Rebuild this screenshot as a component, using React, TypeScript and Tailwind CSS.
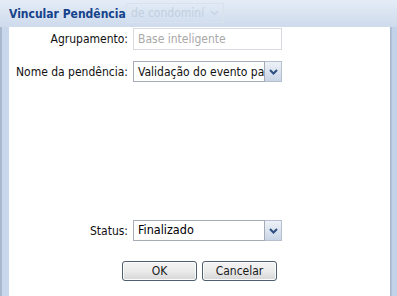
const font = { fontFamily: '"DejaVu Sans Condensed", "DejaVu Sans", Tahoma, sans-serif' };

function Chevron() {
  return (
    <svg width="9" height="6" viewBox="0 0 9 6" className="block">
      <path d="M1 1 L4.5 4.5 L8 1" fill="none" stroke="#2d4f80" strokeWidth="2" />
    </svg>
  );
}

function Select({ value, textClass }: { value: string; textClass: string }) {
  return (
    <div className="flex h-[21px] w-[149px]">
      <div className={`flex-1 flex items-center border border-[#a5acb5] bg-white pl-[4px] overflow-hidden whitespace-nowrap ${textClass}`}>
        {value}
      </div>
      <div className="w-[17px] flex items-center justify-center border border-l-0 border-[#b5bfcd] bg-gradient-to-b from-[#eef2f8] to-[#c9d5e6]">
        <Chevron />
      </div>
    </div>
  );
}

function Button({ label }: { label: string }) {
  return (
    <button className="h-[20px] w-[75px] rounded-[3px] border border-[#4f5e70] bg-gradient-to-b from-[#f4f4f4] via-[#ebebeb] to-[#d6d6d6] text-[12px] text-[#1a1a1a] shadow-[inset_0_0_0_1px_#fcfcfc]">
      {label}
    </button>
  );
}

export default function App() {
  return (
    <div className="w-[397px] h-[296px] overflow-hidden flex flex-col bg-[#c8d7eb]" style={font}>
      <div className="relative h-[27px] flex items-center pl-[9px] bg-gradient-to-b from-[#e4ecf7] to-[#cedbec]">
        <div className="absolute left-[126px] top-[3px] h-[20px] w-[98px] flex items-center gap-[6px] pl-[4px] border border-[#d8e1ec] text-[12px] text-[#c2cfdf]">
          <span>de condominí</span>
          <svg width="9" height="6" viewBox="0 0 9 6">
            <path d="M1 1 L4.5 4.5 L8 1" fill="none" stroke="#c8d3e3" strokeWidth="1.5" />
          </svg>
        </div>
        <span className="relative text-[12px] font-bold text-[#15428b]">Vincular Pendência</span>
      </div>
      <div className="flex flex-1">
        <div className="w-[9px] border-l-[2px] border-[#a9b8cc] bg-[#c8d7eb]" />
        <div className="flex-1 bg-white border-r border-[#a9b8cc] flex flex-col pt-[1px] text-[12px] text-[#111]">
          <div className="flex items-center h-[22px]">
            <div className="w-[124px] text-right pr-[5px]">Agrupamento:</div>
            <div className="h-[22px] w-[149px] flex items-center border border-[#d7dbe0] pl-[4px] text-[#a9a9a9]">Base inteligente</div>
          </div>
          <div className="flex items-center mt-[11px]">
            <div className="w-[124px] text-right pr-[5px]">Nome da pendência:</div>
            <Select value="Validação do evento pa" textClass="text-[12px]" />
          </div>
          <div className="flex items-center mt-[138px]">
            <div className="w-[124px] text-right pr-[5px]">Status:</div>
            <Select value="Finalizado" textClass="text-[12.5px] text-black" />
          </div>
          <div className="flex gap-[5px] pl-[113px] mt-[20px]">
            <Button label="OK" />
            <Button label="Cancelar" />
          </div>
        </div>
        <div className="w-[6px] bg-[#c2d2e8] border-l border-[#b0c2da]" />
      </div>
    </div>
  );
}
